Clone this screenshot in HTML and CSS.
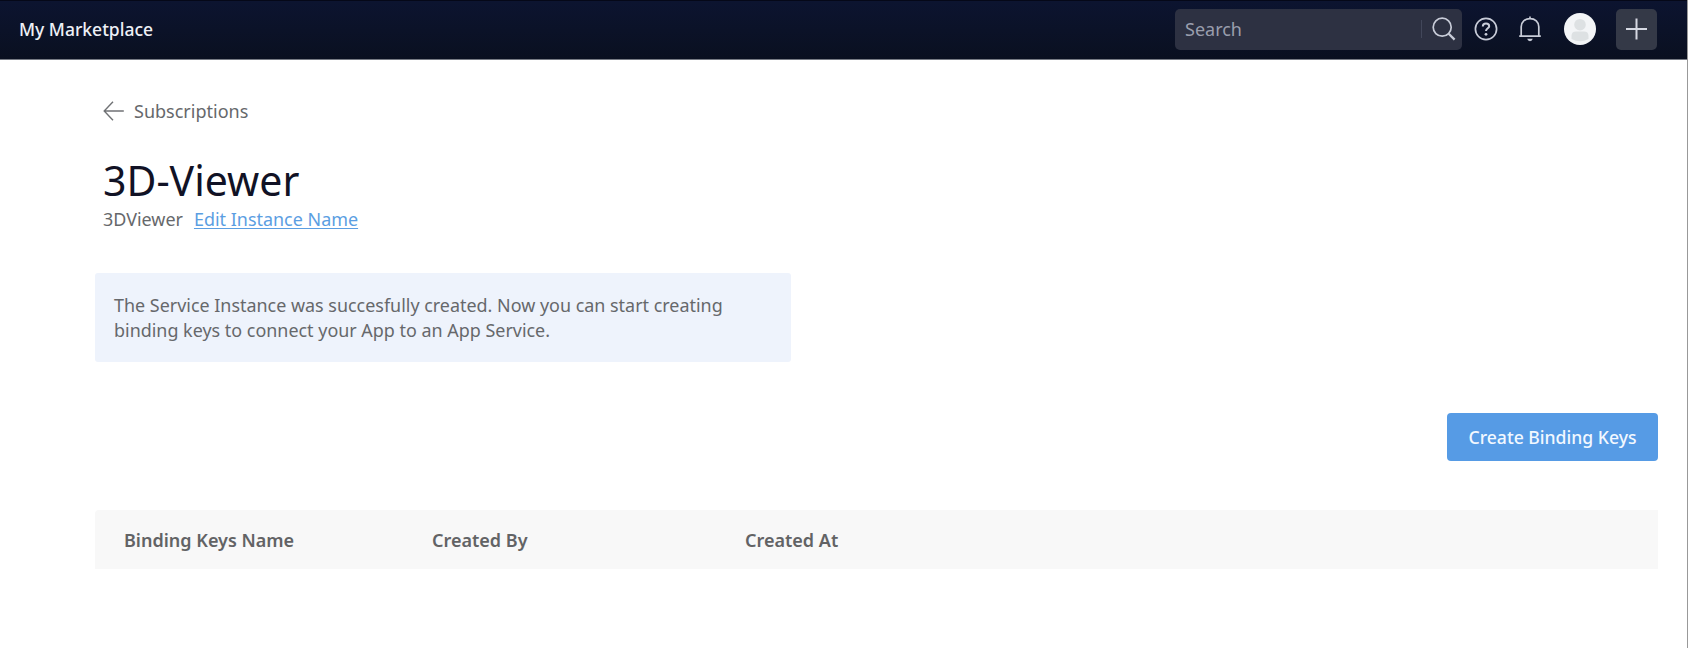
FILE: index.html
```
<!DOCTYPE html>
<html lang="en">
<head>
<meta charset="utf-8">
<title>My Marketplace</title>
<link rel="stylesheet" href="styles.css">
</head>
<body>
<div class="page">
  <header class="topbar">
    <span class="brand">My Marketplace</span>
    <div class="search">
      <span class="search-label">Search</span>
      <span class="search-divider"></span>
      <svg class="search-icon" width="24" height="24" viewBox="0 0 24 24"><circle cx="10.2" cy="10.2" r="9"/><path d="M16.7 16.7L22.6 22.6" stroke-width="2.3"/></svg>
    </div>
    <svg class="icon help" width="24" height="24" viewBox="0 0 24 24"><circle cx="12" cy="12" r="10.6"/><path d="M8.8 9.4C8.8 7.5 10.1 6.5 12 6.5S15.2 7.6 15.2 9.2C15.2 11.4 12 11.3 12 14.1" stroke-width="2"/><circle class="dot" cx="12" cy="17.3" r="1.4"/></svg>
    <svg class="icon bell" width="24" height="26" viewBox="0 0 24 26"><path d="M1.2 20.2H22.8M3.2 20V10.8C3.2 5.8 7 2.6 12 2.6S20.8 5.8 20.8 10.8V20M12 .5V2.6"/><path class="dot" d="M9.2 22.8H14.8Q14.2 25.2 12 25.2T9.2 22.8Z"/></svg>
    <svg class="avatar" width="32" height="32" viewBox="0 0 32 32"><circle cx="16" cy="16" r="16" fill="#f3f5f7"/><circle cx="16" cy="11.7" r="5.8" fill="#dde1e3"/><path d="M7.5 26V23Q7.5 18.6 12.2 18.6H19.8Q24.5 18.6 24.5 23V26Q16 30.5 7.5 26Z" fill="#dde1e3"/></svg>
    <button class="add" aria-label="Add"><svg width="22" height="22" viewBox="0 0 22 22"><path d="M10.5 .5V21.5M0 11H21"/></svg></button>
  </header>
  <main class="content">
    <a class="back"><svg width="21" height="20" viewBox="0 0 21 20"><path d="M10 .8L1.2 10L10 19.2M1.2 10H20.8"/></svg><span>Subscriptions</span></a>
    <h1 class="title">3D-Viewer</h1>
    <div class="instance"><span class="instance-name">3DViewer</span><a class="edit">Edit Instance Name</a></div>
    <div class="notice"><div class="notice-first">The Service Instance was succesfully created. Now you can start creating</div><div class="notice-second">binding keys to connect your App to an App Service.</div></div>
    <div class="actions"><button class="create"><span>Create Binding Keys</span></button></div>
    <div class="table-head">
      <span class="col-name">Binding Keys Name</span><span class="col-by">Created By</span><span class="col-at">Created At</span>
    </div>
  </main>
</div>
</body>
</html>
```
FILE: styles.css
```
* { box-sizing: border-box; }
body { margin: 0; background: #fff; font-family: "Noto Sans", sans-serif; font-size: 18px; color: #66686b; }
.page { height: 648px; overflow: hidden; border-right: 1px solid #999; }
span, a, h1, .notice div { white-space: nowrap; }
button { border: 0; padding: 0; font: inherit; display: flex; align-items: center; justify-content: center; }
svg { fill: none; flex: none; }

.topbar { height: 60px; margin-right: -1px; padding: 0 31px 2px 19px; display: flex; align-items: center; background: linear-gradient(#0c1430, #0a1020); border-top: 1px solid #050818; border-bottom: 1px solid #777b84; }
.brand { font-size: 17.5px; font-weight: 500; color: #eef0f6; margin-right: auto; }
.search { width: 287px; height: 41px; margin-right: 12px; padding: 0 6px 0 10px; border-radius: 5px; display: flex; align-items: center; background: #2d3142; }
.search-label { color: #9a9ead; margin-right: auto; }
.search-divider { width: 1px; height: 18px; background: #42475a; margin-right: 10px; }
.search-icon, .icon { stroke: #c8ccd8; stroke-width: 1.7; }
.icon .dot { fill: #c8ccd8; stroke: none; }
.bell { margin: 0 22px 0 20px; }
.avatar { margin-right: 20px; }
.add { width: 41px; height: 41px; border-radius: 5px; background: #343947; }
.add svg { stroke: #d5d8e2; stroke-width: 2; }

.content { padding: 38px 29px 0 95px; }
.back { display: flex; align-items: center; gap: 10px; height: 25px; padding-left: 8px; }
.back svg { stroke: #707275; stroke-width: 1.4; }
.title { margin: 29px 0 0 8px; height: 57px; line-height: 57px; font-size: 41px; font-weight: 400; color: #111225; }
.instance { display: flex; gap: 11px; height: 24px; margin: -2px 0 0 8px; font-size: 17.95px; line-height: 24px; }
.edit { color: #5b9ee2; text-decoration: underline; text-decoration-thickness: 1px; text-underline-offset: 2px; }
.notice { width: 696px; height: 89px; margin-top: 42px; padding: 20px 19px; border-radius: 3px; background: #eef3fc; font-size: 17.93px; line-height: 25px; }
.actions { display: flex; justify-content: flex-end; margin-top: 51px; }
.create { width: 211px; height: 48px; border-radius: 4px; background: #569be5; color: #f2f8ff; font-size: 17.6px; font-weight: 500; }
.table-head { display: grid; grid-template-columns: 308px 313px 1fr; align-items: center; height: 59px; margin-top: 49px; padding-left: 29px; background: #f8f8f8; font-weight: 600; color: #626365; border-radius: 4px 0 0 0; }
```
